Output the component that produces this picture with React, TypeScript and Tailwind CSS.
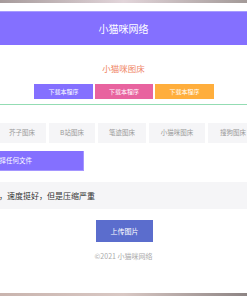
export default function App() {
  const tabs = [
    { name: "芥子图床", w: "w-[48px]" },
    { name: "B站图床", w: "w-[46px]" },
    { name: "笔迹图床", w: "w-[48px]" },
    { name: "小猫咪图床", w: "w-[56px]" },
    { name: "搜狗图床", w: "w-[50px]" },
  ];

  return (
    <div className="flex h-[296px] w-[247px] flex-col overflow-hidden bg-white font-['Noto_Sans_CJK_SC',sans-serif]">
      <div className="h-[3px] shrink-0 bg-gradient-to-r from-[#a69b9b] via-[#e2d5da] to-[#a39a98]" />

      <header className="mt-[8px] flex h-[34px] shrink-0 items-center justify-center border-t border-[#a79bff] bg-[#8470ff] text-[10px] text-white">
        小猫咪网络
      </header>

      <h1 className="mt-[17px] text-center text-[8.5px] leading-[12px] text-[#ef8465]">小猫咪图床</h1>

      <div className="mt-[10px] flex justify-center gap-[2px] pl-[1px]">
        <button className="h-[15px] w-[59px] bg-[#8470ff] text-[6px] text-white">下载本程序</button>
        <button className="h-[15px] w-[58px] bg-[#e8639f] text-[6px] text-white">下载本程序</button>
        <button className="h-[15px] w-[59px] bg-[#ffae3c] text-[6px] text-white">下载本程序</button>
      </div>

      <div className="mt-[5px] h-px shrink-0 bg-[#93dcb3]" />

      <div className="mt-[18px] -ml-[2px] flex gap-[3px]">
        {tabs.map((t) => (
          <div key={t.name} className={`${t.w} flex h-[20px] shrink-0 items-center justify-center bg-[#f5f5f7] text-[6.5px] text-[#9a9a9a]`}>
            {t.name}
          </div>
        ))}
      </div>

      <button className="mt-[8px] -ml-[19px] flex h-[20px] w-[103px] shrink-0 items-center border-r border-b border-[#a596ff] bg-[#8470ff] pl-[12px] text-[6.5px] text-white">
        选择任何文件
      </button>

      <div className="mt-[11px] flex h-[27px] shrink-0 items-center bg-[#f5f5f7] text-[8px] text-[#333]">
        <span className="-ml-[1px]">，速度挺好，但是压缩严重</span>
      </div>

      <div className="mt-[11px] flex justify-center pl-[2px]">
        <button className="h-[22px] w-[57px] bg-[#5b6dcd] text-[7px] text-white">上传图片</button>
      </div>

      <p className="mt-[9px] text-center text-[7px] leading-[10px] text-[#aaa]">©2021 小猫咪网络</p>

      <div className="mt-auto h-[3px] shrink-0 bg-gradient-to-r from-[#c9b4ae] via-[#d9c8c4] to-[#8d8484]" />
    </div>
  );
}
